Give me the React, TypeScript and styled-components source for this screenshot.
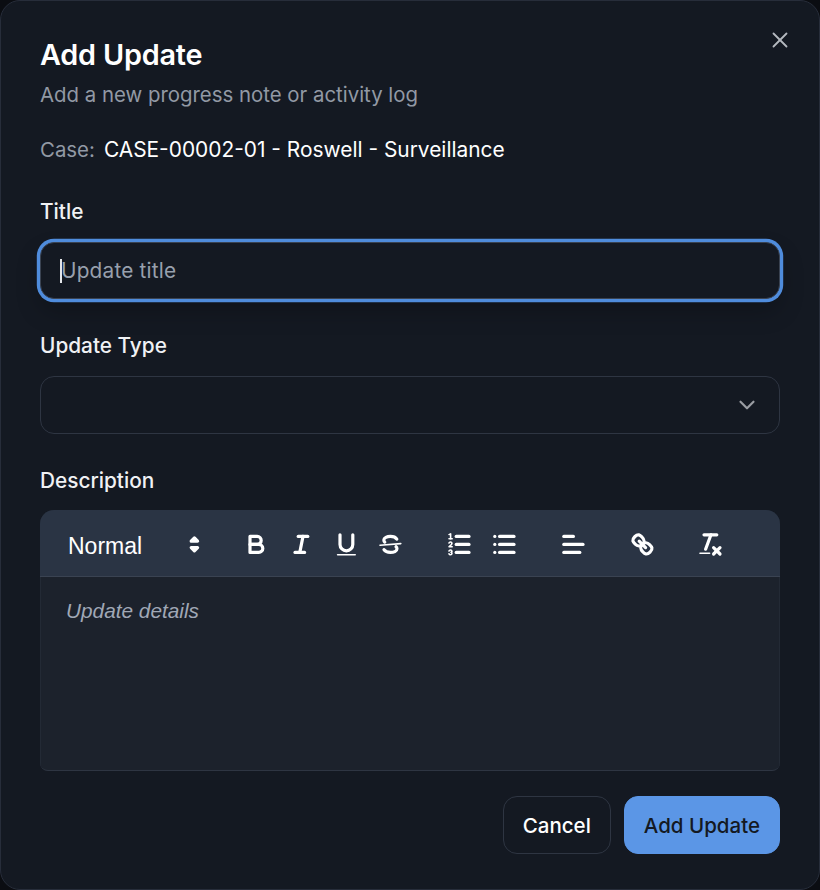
import styled, {createGlobalStyle} from 'styled-components';
import {X, ChevronDown} from 'lucide-react';

const GlobalStyle = createGlobalStyle`
    html, body {
        margin: 0;
        padding: 0;
        background: #0b0d12;
    }
    body {
        font-family: Inter, "Liberation Sans", sans-serif;
    }
`

const Dialog = styled.div`
    position: relative;
    box-sizing: border-box;
    width: 820px;
    height: 890px;
    padding: 38px 39px 0;
    background: #141922;
    border: 1px solid #272d3a;
    border-radius: 20px;
    color: #fff;
`

const CloseButton = styled.button`
    position: absolute;
    top: 26px;
    right: 26px;
    display: flex;
    padding: 0;
    border: none;
    background: none;
    color: #b4b8bf;
`

const Title = styled.h2`
    margin: 0;
    font-size: 28.8px;
    line-height: 32px;
    font-weight: 600;
    letter-spacing: -0.2px;
    color: #fff;
`

const Subtitle = styled.p`
    margin: 12px 0 0;
    font-size: 20.4px;
    line-height: 24px;
    color: #9299a5;
`

const CaseRow = styled.div`
    display: flex;
    align-items: baseline;
    gap: 9px;
    margin-top: 31px;
    padding-bottom: 2.8px;
    font-size: 20.9px;
    line-height: 24px;
`

const CaseLabel = styled.span`
    font-size: 20.4px;
    color: #9299a5;
`

const Field = styled.div`
    margin-top: 35.2px;
`

const Label = styled.label`
    display: block;
    margin-bottom: 17.6px;
    font-size: 20.8px;
    line-height: 24px;
    font-weight: 500;
    color: #f0f1f4;
`

const InputWrap = styled.div`
    position: relative;
`

const TitleInput = styled.input`
    display: block;
    box-sizing: border-box;
    width: 100%;
    height: 57.6px;
    padding: 1px 20px 0;
    background: #141922;
    border: 1px solid #3a4352;
    border-radius: 14px;
    outline: none;
    box-shadow: 0 0 0 3.2px #4f8cdc, 0 12px 24px rgba(0, 0, 0, 0.24);
    font: 400 20.8px Inter, sans-serif;
    letter-spacing: 0.2px;
    color: #fff;
    caret-color: transparent;

    &::placeholder {
        color: #98a0ad;
        opacity: 1;
    }
`

const Caret = styled.span`
    position: absolute;
    left: 20px;
    top: 17px;
    width: 2px;
    height: 24px;
    background: #e4e6ea;
`

const SelectBox = styled.button`
    display: flex;
    align-items: center;
    justify-content: flex-end;
    box-sizing: border-box;
    width: 100%;
    height: 57.6px;
    padding: 0 19px;
    background: #141922;
    border: 1px solid #2e3542;
    border-radius: 14px;
    color: #9a9da3;
`

const Editor = styled.div`
    border-radius: 14px 14px 8px 8px;
    overflow: hidden;
    background: #1c222c;
    border-bottom: 1px solid #2e3542;
`

const Toolbar = styled.div`
    display: flex;
    align-items: center;
    gap: 24px;
    box-sizing: border-box;
    height: 67px;
    padding: 3px 12.8px 0 13.2px;
    background: #2a3444;
    border-bottom: 1px solid #3a4352;
`

const Picker = styled.div`
    display: flex;
    align-items: center;
    justify-content: space-between;
    box-sizing: border-box;
    width: 156.8px;
    height: 38.4px;
    padding: 0 1px 0 14.8px;
    font: 400 23px "Liberation Sans", Arial, sans-serif;
    color: #fff;
`

const PickerLabel = styled.span`
    padding-top: 3px;
`

const Group = styled.div`
    display: flex;
`

const ToolButton = styled.button`
    display: block;
    box-sizing: border-box;
    width: 44.8px;
    height: 38.4px;
    padding: 4.8px 8px;
    border: none;
    background: none;
`

const QlIcon = styled.svg.attrs({viewBox: '0 0 18 18'})`
    display: block;
    width: 28.8px;
    height: 28.8px;
    stroke: #fff;
    stroke-width: 2;
    stroke-linecap: round;
    stroke-linejoin: round;
    fill: none;

    .thin {
        stroke-width: 1;
    }

    .solid {
        fill: #fff;
        stroke: none;
    }

    .filled {
        fill: #fff;
    }
`

const EditorBody = styled.div`
    height: 193px;
    box-sizing: border-box;
    padding: 20px 25px;
    border-left: 1px solid #232a35;
    border-right: 1px solid #232a35;
    font: italic 400 20.8px/28px "Liberation Sans", Arial, sans-serif;
    color: #a0a8b6;
`

const Footer = styled.div`
    display: flex;
    justify-content: flex-end;
    gap: 13px;
    margin-top: 25px;
`

const Button = styled.button<{$primary?: boolean}>`
    box-sizing: border-box;
    height: 57.6px;
    padding: 1px 19px 0;
    border-radius: 14px;
    border: 1px solid ${p => p.$primary ? '#5b96e6' : '#2e3542'};
    background: ${p => p.$primary ? '#5b96e6' : 'transparent'};
    color: ${p => p.$primary ? '#141922' : '#fff'};
    font: 500 20.5px Inter, sans-serif;
`

const tools = {
    bold: <>
        <path d="M5,4H9.5A2.5,2.5,0,0,1,12,6.5v0A2.5,2.5,0,0,1,9.5,9H5V4Z"/>
        <path d="M5,9h5.5A2.5,2.5,0,0,1,13,11.5v0A2.5,2.5,0,0,1,10.5,14H5V9Z"/>
    </>,
    italic: <>
        <line x1="7" x2="13" y1="4" y2="4"/>
        <line x1="5" x2="11" y1="14" y2="14"/>
        <line x1="8" x2="10" y1="14" y2="4"/>
    </>,
    underline: <>
        <path d="M5,3V9a4,4,0,0,0,4,4H9a4,4,0,0,0,4-4V3"/>
        <rect className="solid" height="1" rx="0.5" ry="0.5" width="12" x="3" y="15"/>
    </>,
    strike: <>
        <line className="thin" x1="15.5" x2="2.5" y1="8.5" y2="9.5"/>
        <path d="M13,5.7C12.3,4.6,10.8,4,9,4,6.9,4,4.9,4.8,4.9,6.3c0,.5.2,1,.6,1.3"/>
        <path d="M5,12.3C5.7,13.4,7.2,14,9,14c2.1,0,4.1-.8,4.1-2.3,0-.5-.2-1-.6-1.3"/>
    </>,
    ordered: <>
        <line x1="7" x2="15" y1="4" y2="4"/>
        <line x1="7" x2="15" y1="9" y2="9"/>
        <line x1="7" x2="15" y1="14" y2="14"/>
        <line className="thin" x1="2.5" x2="4.5" y1="5.5" y2="5.5"/>
        <path className="solid" d="M3.5,6A0.5,0.5,0,0,1,3,5.5V3.085l-0.276.138A0.5,0.5,0,0,1,2.053,3c-0.124-.247-0.023-0.324.224-0.447l1-.5A0.5,0.5,0,0,1,4,2.5v3A0.5,0.5,0,0,1,3.5,6Z"/>
        <path className="thin" d="M4.5,10.5h-2c0-.234,1.85-1.076,1.85-2.234A0.959,0.959,0,0,0,2.5,8.156"/>
        <path className="thin" d="M2.5,14.846a0.959,0.959,0,0,0,1.85-.109A0.7,0.7,0,0,0,3.75,14a0.688,0.688,0,0,0,.6-0.736,0.959,0.959,0,0,0-1.85-.109"/>
    </>,
    bullet: <>
        <line x1="6" x2="15" y1="4" y2="4"/>
        <line x1="6" x2="15" y1="9" y2="9"/>
        <line x1="6" x2="15" y1="14" y2="14"/>
        <line x1="3" x2="3" y1="4" y2="4"/>
        <line x1="3" x2="3" y1="9" y2="9"/>
        <line x1="3" x2="3" y1="14" y2="14"/>
    </>,
    align: <>
        <line x1="3" x2="15" y1="9" y2="9"/>
        <line x1="3" x2="13" y1="14" y2="14"/>
        <line x1="3" x2="9" y1="4" y2="4"/>
    </>,
    link: <>
        <line x1="7" x2="11" y1="7" y2="11"/>
        <path d="M8.9,4.577a3.476,3.476,0,0,1,.36,4.679A3.476,3.476,0,0,1,4.577,8.9C3.185,7.5,2.035,6.4,4.217,4.217S7.5,3.185,8.9,4.577Z"/>
        <path d="M13.423,9.1a3.476,3.476,0,0,0-4.679-.36,3.476,3.476,0,0,0,.36,4.679c1.392,1.392,2.5,2.542,4.679.36S14.815,10.5,13.423,9.1Z"/>
    </>,
    clean: <>
        <line x1="5" x2="13" y1="3" y2="3"/>
        <line x1="6" x2="9.35" y1="12" y2="3"/>
        <line x1="11" x2="15" y1="11" y2="15"/>
        <line x1="15" x2="11" y1="11" y2="15"/>
        <rect className="solid" height="1" rx="0.5" ry="0.5" width="7" x="2" y="14"/>
    </>,
}

type ToolName = keyof typeof tools

const toolGroups: ToolName[][] = [
    ['bold', 'italic', 'underline', 'strike'],
    ['ordered', 'bullet'],
    ['align'],
    ['link'],
    ['clean'],
]

const App = () => (
    <>
        <GlobalStyle/>
        <Dialog>
            <CloseButton aria-label="Close"><X size={26} strokeWidth={1.7}/></CloseButton>
            <Title>Add Update</Title>
            <Subtitle>Add a new progress note or activity log</Subtitle>
            <CaseRow>
                <CaseLabel>Case:</CaseLabel>
                <span>CASE-00002-01 - Roswell - Surveillance</span>
            </CaseRow>

            <Field>
                <Label>Title</Label>
                <InputWrap>
                    <TitleInput placeholder="Update title"/>
                    <Caret/>
                </InputWrap>
            </Field>

            <Field>
                <Label>Update Type</Label>
                <SelectBox><ChevronDown size={26} strokeWidth={2}/></SelectBox>
            </Field>

            <Field>
                <Label>Description</Label>
                <Editor>
                    <Toolbar>
                        <Picker>
                            <PickerLabel>Normal</PickerLabel>
                            <QlIcon>
                                <polygon className="filled" points="7 11 9 13 11 11 7 11"/>
                                <polygon className="filled" points="7 7 9 5 11 7 7 7"/>
                            </QlIcon>
                        </Picker>
                        {toolGroups.map((group, idx) => (
                            <Group key={idx}>
                                {group.map(name => (
                                    <ToolButton key={name} aria-label={name}>
                                        <QlIcon>{tools[name]}</QlIcon>
                                    </ToolButton>
                                ))}
                            </Group>
                        ))}
                    </Toolbar>
                    <EditorBody>Update details</EditorBody>
                </Editor>
            </Field>

            <Footer>
                <Button>Cancel</Button>
                <Button $primary>Add Update</Button>
            </Footer>
        </Dialog>
    </>
)

export default App
